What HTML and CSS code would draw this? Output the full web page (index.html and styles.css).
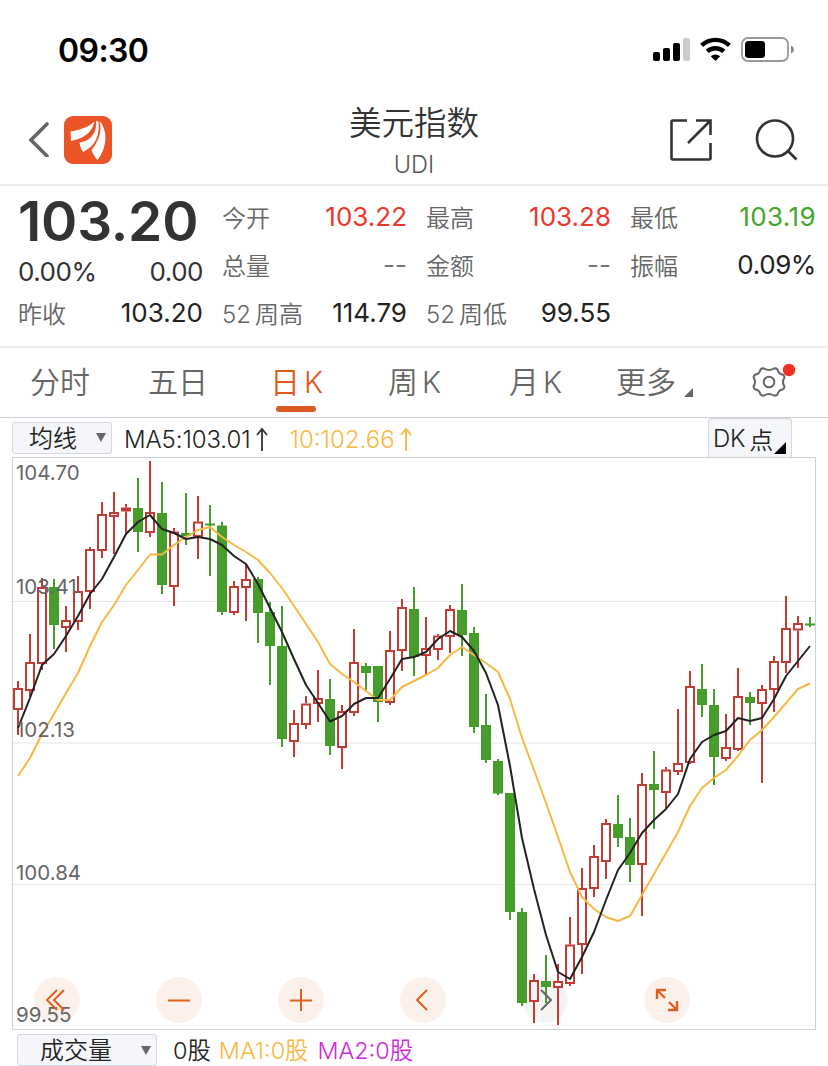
FILE: index.html
```html
<!DOCTYPE html>
<html lang="zh-CN">
<head>
<meta charset="utf-8">
<title>美元指数 UDI</title>
<link rel="stylesheet" href="styles.css">
</head>
<body>
<div class="statusbar">
  <span class="clock">09:30</span>
  <svg class="status-icons" width="144" height="30" viewBox="0 0 144 30">
    <rect x="1" y="17" width="7" height="9" rx="2"/><rect x="11" y="13" width="7" height="13" rx="2"/>
    <rect x="21" y="8" width="7" height="18" rx="2"/><rect x="31" y="3" width="7" height="23" rx="2" fill="#ccc"/>
    <g fill="none" stroke="#000" stroke-width="4.4"><path d="M49.600 10.300A20.500 20.500 0 0 1 77.400 10.300"/><path d="M55.200 16.400A12.500 12.500 0 0 1 71.800 16.400"/></g>
    <path d="M63.500 26L58.800 21.300Q63.500 17.500 68.200 21.300Z"/>
    <rect x="90" y="3" width="46" height="23" rx="6" fill="none" stroke="#999" stroke-width="1.800"/>
    <rect x="93" y="6" width="20" height="17" rx="3.500"/><path d="M139 10.500Q142 12 142 14.500T139 18.500Z" fill="#888"/>
  </svg>
</div>
<header class="header">
  <div class="nav-left">
    <svg width="24" height="38" viewBox="0 0 24 38"><path d="M21 5L5 21L21 37" fill="none" stroke="#666" stroke-width="3.600" stroke-linecap="round"/></svg>
    <svg width="48" height="48" viewBox="0 0 48 48"><rect width="48" height="48" rx="9" fill="#eb5427"/><g fill="#fff"><path d="M6.500 15.500C15 14 24 11.500 30.500 5.500C28.500 15 21 22.500 7 25Z"/><path d="M32 4.500C33 13 30 19 25 23C21.500 25.500 18 26 15.500 26.500C16 30 17 33 19 36C29 31 36 23 34.500 6Z"/><path d="M35.500 5C38.500 16 34 26 27.500 34C29 38 31 41.500 33.500 44C41 35 46 17 35.500 5Z"/></g></svg>
  </div>
  <div class="title"><h1>美元指数</h1><span>UDI</span></div>
  <div class="nav-right">
    <svg width="44" height="44" viewBox="0 0 44 44" fill="none" stroke="#333" stroke-width="2.600"><path d="M18 2.500H4Q2.500 2.500 2.500 4V40Q2.500 41.500 4 41.500H40Q41.500 41.500 41.500 40V25M27 2.500H41.500V17M41 3L19 25"/></svg>
    <svg width="44" height="44" viewBox="0 0 44 44" fill="none" stroke="#333" stroke-width="2.600"><circle cx="20" cy="20.500" r="18"/><path d="M33 33L41.500 41.500"/></svg>
  </div>
</header>
<section class="quote">
  <div class="col summary">
    <div class="price">103.20</div>
    <div class="row"><b class="dim">0.00%</b><b class="dim">0.00</b></div>
    <div class="row"><span>昨收</span><b>103.20</b></div>
  </div>
  <div class="col">
    <div class="row"><span>今开</span><b class="up">103.22</b></div>
    <div class="row"><span>总量</span><b class="none">--</b></div>
    <div class="row"><span><i>52</i>周高</span><b>114.79</b></div>
  </div>
  <div class="col">
    <div class="row"><span>最高</span><b class="up">103.28</b></div>
    <div class="row"><span>金额</span><b class="none">--</b></div>
    <div class="row"><span><i>52</i>周低</span><b>99.55</b></div>
  </div>
  <div class="col">
    <div class="row"><span>最低</span><b class="down">103.19</b></div>
    <div class="row"><span>振幅</span><b class="pct">0.09%</b></div>
  </div>
</section>
<nav class="tabs">
  <span>分时</span><span>五日</span><span class="active">日<i>K</i></span><span>周<i>K</i></span><span>月<i>K</i></span>
  <span>更多<svg class="corner" width="9" height="9" viewBox="0 0 9 9"><path d="M9 0V9H0Z" fill="#666"/></svg></span>
  <svg class="gear" width="46" height="40" viewBox="0 0 46 40"><g fill="none" stroke="#666" stroke-width="2"><circle cx="18" cy="20" r="5.300"/><path transform="translate(.5 0)" d="M12.500 6.500Q17.500 9.500 22.500 6.500Q24.500 6 26 7.500Q27 12 31 12.500Q33 13.500 33 15.500Q30 20 33 24.500Q33 26.500 31 27.500Q27 28 26 32.500Q24.500 34 22.500 33.500Q17.500 30.500 12.500 33.500Q10.500 34 9 32.500Q8 28 4 27.500Q2 26.500 2 24.500Q5 20 2 15.500Q2 13.500 4 12.500Q8 12 9 7.500Q10.500 6 12.500 6.500Z"/></g><circle cx="38" cy="8" r="6.200" fill="#f03122"/></svg>
</nav>
<div class="indicator">
  <div class="select ma"><span>均线</span><svg width="10" height="9" viewBox="0 0 10 9"><path d="M0 0H10L5 9Z"/></svg></div>
  <span class="ma5">MA5:103.01</span><svg class="arrow" width="12" height="26" viewBox="0 0 12 26"><path d="M6 25V3M1 9L6 3L11 9"/></svg>
  <span class="ma10">10:102.66</span><svg class="arrow gold" width="12" height="26" viewBox="0 0 12 26"><path d="M6 25V3M1 9L6 3L11 9"/></svg>
  <div class="dk"><i>DK</i>点<svg width="12" height="12" viewBox="0 0 12 12"><path d="M12 0V12H0Z"/></svg></div>
</div>
<svg id="chart" class="chart" width="828" height="573" viewBox="0 457 828 573"></svg>
<footer class="volume">
  <div class="select vol"><span>成交量</span><svg width="10" height="9" viewBox="0 0 10 9"><path d="M0 0H10L5 9Z"/></svg></div>
  <span class="v0">0股</span><span class="v1">MA1:0股</span><span class="v2">MA2:0股</span>
</footer>
<script src="chart.js"></script>
</body>
</html>
```
FILE: styles.css
```css
* { box-sizing: border-box; }
body { margin: 0; width: 828px; height: 1066px; overflow: hidden; background: #fff; color: #333; font-family: Inter, "Noto Sans CJK SC", sans-serif; }
svg { display: block; flex: none; }
i, b { font-style: normal; font-weight: 400; }
.statusbar { height: 100px; padding: 0 32px 0 58px; display: flex; justify-content: space-between; align-items: center; }
.clock { font-size: 32px; font-weight: 600; color: #000; letter-spacing: -0.600px; }
.header { height: 86px; border-bottom: 2px solid #ebebeb; display: grid; grid-template-columns: 278px 272px 278px; }
.nav-left { display: flex; gap: 14px; padding: 16px 0 0 26px; }
.nav-left svg:first-child { margin-top: 3px; }
.title { text-align: center; padding-top: 1px; }
.title h1 { margin: 0; font-size: 32.500px; line-height: 45px; font-weight: 350; color: #333; }
.title span { display: block; font-size: 23.500px; line-height: 34px; font-weight: 300; color: #555; margin-top: 2px; }
.nav-right { display: flex; gap: 42px; padding: 18px 0 0 119px; }
.quote { height: 162px; border-bottom: 2px solid #ebebeb; padding: 7px 12px 0 18px; display: grid; grid-template-columns: 185px 185px 185px 186px; column-gap: 19px; }
.row { height: 48px; display: flex; align-items: center; justify-content: space-between; white-space: nowrap; }
.row span { color: #666; font-size: 24px; font-weight: 350; line-height: 36px; padding-top: 4px; display: flex; }
.row span i { font-size: 24px; margin-right: 4px; font-weight: 300; }
.row b { color: #222; font-size: 26px; line-height: 36px; }
.row b.dim { color: #333; padding-top: 13px; letter-spacing: -0.500px; }
.row b.pct { letter-spacing: -0.400px; }
.row b.up { color: #ed362d; }
.row b.down { color: #45a52a; letter-spacing: 0.400px; }
.row b.none { color: #777; }
.price { height: 48px; line-height: 56px; font-size: 55px; font-weight: 600; letter-spacing: -0.200px; white-space: nowrap; }
.tabs { height: 70px; padding-left: 30px; border-bottom: 1px solid #cfcfd6; display: grid; grid-template-columns: 118px 122px 118px 121px 107px 135px 60px; color: #666; font-size: 30px; font-weight: 350; line-height: 68px; white-space: nowrap; }
.tabs span { display: flex; }
.tabs i { font-size: 29.500px; margin-left: 4px; font-weight: 300; }
.tabs .active { color: #df5a1f; position: relative; }
.tabs .active::after { content: ""; position: absolute; left: 6px; top: 58px; width: 40px; height: 6px; border-radius: 3px; background: #da5a22; }
.corner { margin: 40px 0 0 8px; }
.gear { margin-top: 14px; }
.indicator { height: 39px; padding: 0 36px 0 12px; display: flex; align-items: center; font-size: 24px; font-weight: 350; white-space: nowrap; position: relative; }
.select { display: flex; align-items: center; justify-content: space-between; height: 32px; border: 1px solid #d3d6dd; border-radius: 3px; background: #f5f6f9; font-size: 24px; color: #222; line-height: 32px; font-weight: 350; }
.select span { padding-top: 2px; }
.select svg { fill: #666; }
.ma { width: 100px; padding: 0 5px 0 16px; }
.ma5 { margin-left: 12px; padding-top: 3px; color: #222; font-weight: 300; letter-spacing: -0.100px; }
.ma10 { margin-left: 22px; padding-top: 3px; color: #f6b944; font-weight: 300; }
.arrow { margin: 3px 0 0 5px; fill: none; stroke: #333; stroke-width: 1.800; }
.gold { stroke: #f6b944; }
.dk { margin-left: auto; width: 84px; height: 39px; align-self: flex-start; display: flex; align-items: center; padding: 0 0 0 4px; border: 1px solid #d3d6dd; border-bottom: 0; border-radius: 4px 4px 0 0; background: #f5f6f9; color: #222; }
.dk i { margin-right: 4px; font-weight: 300; letter-spacing: -0.300px; }
.dk svg { margin: 19px 0 0 1px; }
.chart text { font-family: Inter, sans-serif; font-size: 20.500px; font-weight: 400; fill: #666; }
.volume { height: 36px; padding: 4px 0 0 17px; display: flex; font-size: 23.400px; line-height: 34px; font-weight: 350; white-space: nowrap; }
.vol { width: 140px; padding: 0 5px 0 22px; }
.v0 { margin-left: 16px; color: #222; }
.v1 { margin-left: 8px; color: #f6b944; }
.v2 { margin-left: 9px; color: #cc2bd9; }
```
FILE: chart.js
```js
// Each candle: direction, high, body top, body bottom, low (in plot units).
const candles = `r 681 688 710 735|r 634 662 691 697|r 578 587 664 670|g 579 587 625 649|r 606 620 628 652|r 576 591 622 630|r 547 549 592 609|r 502 514 551 558|r 492 512 517 554|r 504 507.5 511.500 535|g 478 508 532 552|r 461 512 533 537|g 482 513 585 594|r 528 531.500 587 606|g 493 533 536 545|r 496 521.500 537 559|g 505 523.500 525.500 576|g 522 525.500 612 615|r 581 586 613 615|r 564 579 588 621|g 577 579 613 643|g 602 612 646 685|g 606 646 739 747|r 710 723 742 757|r 696 703.500 725 729|r 670 698 704 722|g 679 699 746 755|r 705 711 748 769|r 629 662 713 716|g 663 666 673 690|g 666 666 702 722|r 631 650 703 705|r 599 607 651 671|g 587 609 657 676|r 617 648 656 676|r 634 635.500 650 660|r 605 609 637 653|g 584 610 635 656|g 627 633 727 733|g 694 725 760 763|g 759 761 793.500 795|g 793 793 912 920|g 908 912 1003 1006|r 974 980 1002 1023|g 955 981 987 1003|r 964 981 988 1025|r 917 944.500 984 986|r 868 888 945 974|r 845 856 889 897|r 819 823 862 879|g 795 824 838 847|g 818 837 865 882|r 773 784 865 916|g 751 784 790 829|r 767 769.500 793 808|r 709 763 772 775|r 671 686 763 764|g 664 689 705 717|g 689 705 757 785|r 714 747 759 761|r 668 696 750 751|g 692 697 703 725|r 685 689 704 783|r 656 661 690 712|r 596 628 663 673|r 616 623 630.500 668|g 617 623.500 625.500 627`.split('|').map(c => c.split(' '));
const ma5 = [728,698,665,654,636,616,594,579,557,534,522,515,529,533,539,537,539,545,556,564,584,608,632,659,685,703,721.5,716,704,698,698,679,659,657,652,639,631,637,651,673,705,766,838,889,935,972,979,957,932,900,870,853,833,820,809,794,759,742,735,731,718,721,718,699,676,661,646];
const ma10 = [776,758,734,714,693,673,646,622,605,585,570,554.5,554.5,545,537,530,527,537,545,552,560,573,588,606,624,642,664,674,682,691,700,700,687,681,675,668,655,647,655,663,672,699,738,770,803,837,872,897,909,917,921,916,895,874,853,832,806,788,778,770,756,740,730,717,703,689,683.5];
const x = i => 18 + 12 * i;
const line = (a, color) => `<polyline points="${a.map((y, i) => x(i) + ',' + y).join(' ')}" fill="none" stroke="${color}" stroke-width="2" stroke-linejoin="round"/>`;

let out = '';
for (const y of [601.5, 743, 884.5]) out += `<path d="M13 ${y}H815" stroke="#e6e6ea" stroke-width="1.2"/>`;
out += '<path d="M13 1025.5H815" stroke="#f3f3f5"/><rect x="12.5" y="457.500" width="803" height="572" fill="none" stroke="#cfcfd4"/>';
[57, 179, 301, 423, 545, 667].forEach(cx => {
  out += `<circle cx="${cx}" cy="1000" r="23" fill="${cx === 545 ? '#f4f4f4' : '#fbf1ea'}"/>`;
});
candles.forEach(([dir, h, t, b, l], i) => {
  const c = x(i);
  if (dir === 'g') {
    out += `<path d="M${c} ${h}V${l}" stroke="#469d2b" stroke-width="2"/><rect x="${c - 5}" y="${t}" width="10" height="${b - t}" fill="#469d2b"/>`;
  } else {
    out += `<path d="M${c} ${h}V${t}M${c} ${b}V${l}" stroke="#c23c36" stroke-width="2"/><rect x="${c - 4}" y="${+t + 1}" width="8" height="${b - t - 2}" fill="none" stroke="#c23c36" stroke-width="2"/>`;
  }
});
out += line(ma10, '#f6b944') + line(ma5, '#222');
[['104.70', 16, 480], ['103.41', 16, 594], ['102.13', 16, 737], ['100.84', 16, 880], ['99.55', 16, 1022]].forEach(([t, tx, ty]) => {
  out += `<text x="${tx}" y="${ty}">${t}</text>`;
});
out += `<g fill="none" stroke="#e0601f" stroke-width="2"><path d="M57 990L47 1000L57 1010M64 990L54 1000L64 1010"/><path d="M168 1000.500H190M290 1000.500H312M301 989V1011"/><path d="M427 990L417 1000L427 1010"/><path d="M541 990L551 1000L541 1010" stroke="#666"/><path d="M657 999V990H666M657 990L665 998M668 1010H677V1001M677 1010L669 1002" stroke-width="2.400"/></g>`;
document.getElementById('chart').innerHTML = out;
```
